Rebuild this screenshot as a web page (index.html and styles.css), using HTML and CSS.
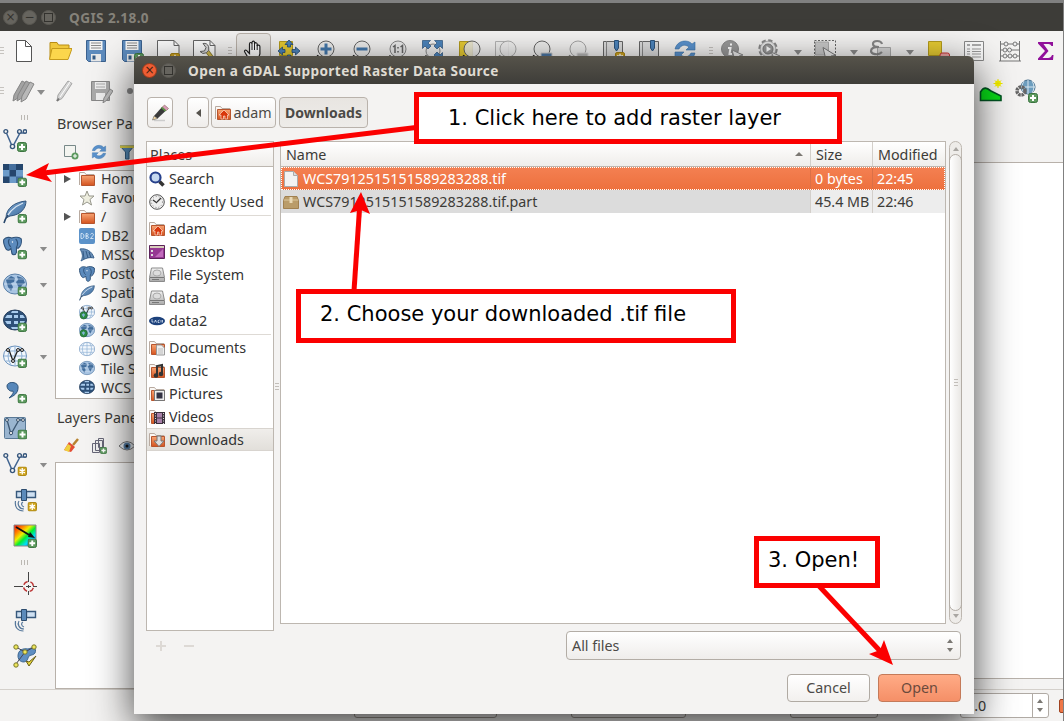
FILE: index.html
```html
<!DOCTYPE html>
<html lang="en">
<head>
<meta charset="utf-8">
<title>QGIS 2.18.0</title>
<link rel="stylesheet" href="styles.css">
</head>
<body>
<svg class="defs" width="0" height="0">
<defs>
<linearGradient id="fold" x1="0" y1="0" x2="0" y2="1"><stop offset="0" stop-color="#f8a574"/><stop offset="1" stop-color="#d4531f"/></linearGradient>
<linearGradient id="blu" x1="0" y1="0" x2="1" y2="1"><stop offset="0" stop-color="#7ea6cf"/><stop offset="1" stop-color="#3c6c9f"/></linearGradient>
<linearGradient id="rain" x1="0" y1="0" x2="1" y2="1"><stop offset="0" stop-color="#f00"/><stop offset=".25" stop-color="#f80"/><stop offset=".4" stop-color="#ee0"/><stop offset=".55" stop-color="#0e3"/><stop offset=".72" stop-color="#0df"/><stop offset="1" stop-color="#02c"/></linearGradient>
<linearGradient id="metal" x1="0" y1="0" x2="0" y2="1"><stop offset="0" stop-color="#f4f4f4"/><stop offset="1" stop-color="#aaa"/></linearGradient>
</defs>
<symbol id="plus" viewBox="0 0 10 10"><rect x=".5" y=".5" width="9" height="9" rx="2" fill="#5d9a5f" stroke="#3b7440"/><path d="M5 2v6M2 5h6" stroke="#fff" stroke-width="2"/></symbol>
<symbol id="star" viewBox="0 0 10 10"><rect x=".5" y=".5" width="9" height="9" rx="1.5" fill="#d0a520" stroke="#a98412"/><path d="M5 1.700v6.600M2.200 3.300l5.600 3.400M7.800 3.300l-5.600 3.400" stroke="#fff" stroke-width="1.400"/></symbol>
<symbol id="new" viewBox="0 0 24 24"><path d="M4.500 1.500h9l6 6v15h-15z" fill="#fff" stroke="#555"/><path d="M13.500 1.500v6h6" fill="none" stroke="#555"/></symbol>
<symbol id="open" viewBox="0 0 24 24"><path d="M2 20V3.500h7l1.500 2.500H21v4" fill="#f0c83c" stroke="#b98d15"/><path d="M1.500 20.500L4 9.500h20l-4 11z" fill="#fcd64c" stroke="#c59a1c"/></symbol>
<symbol id="save" viewBox="0 0 24 24"><path d="M2.500 1.500h19v21h-17l-2-2z" fill="#5d8bbd" stroke="#3b618e"/><path d="M5.500 2h13v9h-13z" fill="#f4f4f4"/><path d="M7 4h10M7 6.500h10M7 9h10" stroke="#888"/><path d="M7 15h10v7.500H7z" fill="#e9e9e9"/><path d="M8.500 16.500h3v4h-3z" fill="#335a85"/></symbol>
<symbol id="saveas" viewBox="0 0 24 24"><use href="#save"/><use href="#plus" x="14" y="14" width="10" height="10"/></symbol>
<symbol id="layout" viewBox="0 0 24 24"><path d="M1.500 17.500V1.500H18l5 5V17.500z" fill="#fff" stroke="#666"/><path d="M18 1.500v5h5" fill="none" stroke="#666"/><use href="#star" x="14" y="14" width="10" height="10"/></symbol>
<symbol id="wrench" viewBox="0 0 24 24"><path d="M1.500 17.500V1.500H18l5 5V17.500z" fill="#fff" stroke="#666"/><path d="M18 1.500v5h5" fill="none" stroke="#666"/><path d="M15 12l6 8" stroke="#8a7a2a" stroke-width="4"/><path d="M15 12l6 8" stroke="#d9c053" stroke-width="2.500"/><path d="M11 4.500a5 5 0 1 1-3 8l4.500-.5 1.500-3.500z" fill="#ddd" stroke="#666"/></symbol>
<symbol id="hand" viewBox="0 0 24 24"><path d="M7.500 21C5 17 4 15 2.500 12.500c0-2 2-1.500 3 0l2 2V5c0-2 2.300-2 2.500 0V3.500c.300-2 2.500-1.800 2.500 0V5c.500-2 2.700-1.500 2.700.300V7c.500-1.500 2.700-1 2.700.800V15l-2 6z" fill="#fff" stroke="#222" stroke-width="1.200"/><path d="M10 5v6M12.500 5v6M15.200 6v5" stroke="#222"/></symbol>
<symbol id="pan" viewBox="0 0 24 24"><path d="M2.500 2.500h13v14h-13z" fill="#e8cc32" stroke="#b59c1c"/><path d="M12 1l4 4.500h-2.500V8h-3V5.500H8zM12 23l4-4.500h-2.500V16h-3v2.500H8zM1 12l4.500-4v2.500H8v3H5.500V16zM23 12l-4.500-4v2.500H15v3h3.500V16z" fill="#4d85bd" stroke="#254d79" stroke-width=".8"/></symbol>
<symbol id="lens" viewBox="0 0 24 24"><path d="M6 17l-5 5" stroke="#111" stroke-width="3.500"/><circle cx="13" cy="10" r="8" fill="#ececec" fill-opacity=".85" stroke="#666"/></symbol>
<symbol id="zin" viewBox="0 0 24 24"><use href="#lens"/><path d="M13 4.500v11M7.500 10h11" stroke="#4479ad" stroke-width="3"/></symbol>
<symbol id="zout" viewBox="0 0 24 24"><use href="#lens"/><path d="M7.500 10h11" stroke="#4479ad" stroke-width="3"/></symbol>
<symbol id="z11" viewBox="0 0 24 24"><path d="M1 22l5-5" stroke="#111" stroke-width="3"/><circle cx="13" cy="10" r="8" fill="#ececec" stroke="#888"/><path d="M8 8l2-1.500v7.500M15.500 8l2-1.500v7.500M13 8v1.500M13 12v1.500" fill="none" stroke="#666" stroke-width="1.500"/></symbol>
<symbol id="zfull" viewBox="0 0 24 24"><path d="M6 17l-5 5" stroke="#111" stroke-width="3"/><circle cx="12" cy="12" r="7" fill="#eee" stroke="#888"/><path d="M1.500 1.500h8L7 4l3 3-3 3-3-3-2.500 2.500zM21.500 1.500h-8L16 4l-3 3 3 3 3-3 2.500 2.500zM21.500 21.500v-8L19 16l-3-3-3 3 3 3-2.500 2.500z" fill="#4d85bd" stroke="#2c557f" stroke-width=".7"/></symbol>
<symbol id="zsel" viewBox="0 0 24 24"><path d="M2.500 2.500h13v16h-13z" fill="#e8cc32" stroke="#b59c1c"/><use href="#lens" x="2"/></symbol>
<symbol id="zlay" viewBox="0 0 24 24" opacity=".5"><path d="M2.500 2.500h13v16h-13z" fill="#eee" stroke="#777"/><use href="#lens" x="2"/></symbol>
<symbol id="zlast" viewBox="0 0 24 24"><use href="#lens"/><path d="M12 22v-8h11v7z" fill="#4d78a5" stroke="#ccc"/></symbol>
<symbol id="znext" viewBox="0 0 24 24" opacity=".55"><use href="#lens"/><path d="M12 22v-8h11v7z" fill="#888" stroke="#ccc"/></symbol>
<symbol id="book" viewBox="0 0 24 24"><path d="M2.500 2.500h19v20h-19z" fill="#ddd" stroke="#666"/><path d="M5.500 2v20" stroke="#888"/><path d="M13.500 1.500h4V9l-2 3-2-3z" fill="#4d85bd" stroke="#2c557f"/></symbol>
<symbol id="bookadd" viewBox="0 0 24 24"><use href="#book"/><use href="#star" x="14" y="13" width="10" height="10"/></symbol>
<symbol id="refresh" viewBox="0 0 24 24"><path d="M2 10c2-9 13-10 17-5l3-2v8h-9l3-3c-4-3-8-2-10 2zM22 14c-2 9-13 10-17 5l-3 2v-8h9l-3 3c4 3 8 2 10-2z" fill="#5b93cf" stroke="#3b73aa" stroke-width=".6"/></symbol>
<symbol id="info" viewBox="0 0 24 24"><circle cx="10" cy="10" r="8.500" fill="#999" stroke="#888"/><path d="M11 4.500v2M8 9h2.500l-1 6H12" stroke="#fff" stroke-width="2" fill="none"/><path d="M12 11l11 5-4 1 4 5-2 1.500-4-5-2 3z" fill="#eee" stroke="#888"/></symbol>
<symbol id="gear" viewBox="0 0 24 24"><circle cx="12" cy="10" r="8.500" fill="#e5e5e5" stroke="#888" stroke-width="2.500" stroke-dasharray="4.200 2.470"/><circle cx="12" cy="10" r="7.800" fill="#e5e5e5" stroke="#999" stroke-width=".7"/><circle cx="12" cy="10" r="5" fill="#999" stroke="#777"/><path d="M10.500 7l4.500 3-4.500 3z" fill="#fff"/><path d="M15 13l9 4-5 4z" fill="#eee" stroke="#888"/></symbol>
<symbol id="select" viewBox="0 0 24 24"><path d="M1.500 1.500h21v19h-21z" fill="none" stroke="#666" stroke-dasharray="2 1.500"/><path d="M2.500 3h13v13h-13z" fill="#c9c9c9" stroke="#aaa"/><path d="M10 8.500l13 8-5 .500 3 5-2 1-3-5-3 3z" fill="#eee" stroke="#777"/></symbol>
<symbol id="eps" viewBox="0 0 24 24"><path d="M8.500 8.500h13v14h-13z" fill="#d5d5d5" stroke="#aaa"/><path d="M13 5C12 1 4 1 4 5c0 2.500 3 3 6 3-5 0-8 1-8 4s7 5 11 1" fill="none" stroke="#888" stroke-width="2.200"/></symbol>
<symbol id="desel" viewBox="0 0 24 24"><path d="M2.500 2.500h13v14h-13z" fill="#e8cc32" stroke="#b59c1c"/><rect x="14" y="14" width="9.500" height="9" rx="2" fill="#eea5a5" stroke="#c33"/></symbol>
<symbol id="table" viewBox="0 0 24 24"><path d="M2.500 2.500h19v19h-19z" fill="#fafafa" stroke="#888"/><path d="M5 6h3M10 6h9" stroke="#aaa" stroke-width="2"/><path d="M5 10h3M10 10h9M5 12.500h3M10 12.500h9M5 15h3M10 15h9M5 18h3M10 18h9" stroke="#999"/></symbol>
<symbol id="abacus" viewBox="0 0 24 24"><path d="M2.500 2v20M21.500 2v20M1 22h22M2 5h20M2 11h20M2 17h20" stroke="#777" fill="none"/><g fill="#eee" stroke="#777"><circle cx="8" cy="5" r="2"/><circle cx="17" cy="5" r="2"/><circle cx="7" cy="11" r="2"/><circle cx="11.500" cy="11" r="2"/><circle cx="7" cy="17" r="2"/><circle cx="12" cy="17" r="2"/><circle cx="17" cy="17" r="2"/></g></symbol>
<symbol id="sigma" viewBox="0 0 24 24"><path d="M4 3h15v4h-1.500q-1-2-3-2H9.500l5 7-6 7H14q3 0 4-3h1.500l-.5 5H4v-1.500L11 12 4 4.500z" fill="#90109a"/></symbol>
<symbol id="pencil" viewBox="0 0 24 24"><path d="M4 22l1-6L15 2l4 2.500-10 15z" fill="#d3d3d3" stroke="#a5a5a5"/><path d="M17 3L7 18" stroke="#fff"/><path d="M4 22l2-2.500" stroke="#777" stroke-width="2"/></symbol>
<symbol id="pencils" viewBox="0 0 24 24"><g fill="#a3a3a3" stroke="#858585"><path d="M1 22l1-6L10 2l4 2-8 15z"/><path d="M5 22l1-6L14 2l4 2-8 15z"/><path d="M9 23l1-6 8-14 4 2-8 15z" fill="#b8b8b8"/></g></symbol>
<symbol id="saveed" viewBox="0 0 24 24"><path d="M2.500 2.500h18v19h-18z" fill="#aaa" stroke="#888"/><path d="M6 3h11v7H6zM7 14h9v7H7z" fill="#eee"/><path d="M7 5h9M7 8h9" stroke="#aaa"/><path d="M14 24l1-5 6-9 3 2-6 9z" fill="#bbb" stroke="#888"/></symbol>
<symbol id="hill" viewBox="0 0 24 24"><path d="M1.500 21.500V13C5 7 8 9 12 12l10 5v4.500z" fill="#08dc18" stroke="#052" stroke-width="1.600"/><circle cx="19" cy="4.500" r="3" fill="#ff0"/><path d="M19 0v9M14.500 4.500h9M16 1.500l6 6M22 1.500l-6 6" stroke="#eee600"/></symbol>
<symbol id="webgear" viewBox="0 0 24 24"><circle cx="13" cy="8" r="7" fill="#6c9dbe" stroke="#3c6686"/><path d="M6 8h14M13 1v14M9 2q-4 6 0 12M17 2q4 6 0 12" stroke="#d6e5ef" fill="none"/><circle cx="6" cy="12" r="4" fill="none" stroke="#666" stroke-width="3.500" stroke-dasharray="2.500 .7"/><use href="#plus" x="13" y="14" width="10" height="10"/></symbol>
<symbol id="vec" viewBox="0 0 24 24"><path d="M3 4l6.500 15L17 5h5" fill="none" stroke="#426591" stroke-width="1.500"/><g fill="#f4f3f2" stroke="#36567c" stroke-width="1.400"><circle cx="2.800" cy="3.500" r="1.900"/><circle cx="9.500" cy="18.500" r="2.100"/><circle cx="16.500" cy="3.500" r="1.900"/><circle cx="22" cy="3.500" r="1.700"/></g></symbol>
<symbol id="addvec" viewBox="0 0 24 24"><use href="#vec"/><use href="#plus" x="14" y="14" width="10" height="10"/></symbol>
<symbol id="newvec" viewBox="0 0 24 24"><use href="#vec"/><use href="#star" x="14.500" y="14.500" width="9.500" height="9.500"/></symbol>
<symbol id="raster" viewBox="0 0 24 24"><path d="M0 0h20v19H0z" fill="#6c9bc9"/><path d="M0 0h6.500v6H0zM13 0h7v6h-7zM6.500 6H13v6.500H6.500zM0 12.500h6.500V19H0z" fill="#25466d"/><path d="M6.500 0H13v6H6.500zM13 12.500h7V19h-7z" fill="#456f9e"/><use href="#plus" x="14.500" y="13.500" width="9.500" height="9.500"/></symbol>
<symbol id="quill" viewBox="0 0 24 24"><path d="M3 18C3 8 12 2 23 1c0 7-5 14-16 15z" fill="url(#blu)" stroke="#31547c"/><path d="M1 23C4 14 10 7 20 3" stroke="#dbe7f3" fill="none" stroke-width="1.300"/><path d="M1 23q1-4 4-8" stroke="#28466a" fill="none" stroke-width="1.500"/></symbol>
<symbol id="addquill" viewBox="0 0 24 24"><use href="#quill"/><use href="#plus" x="14.500" y="14" width="9.500" height="9.500"/></symbol>
<symbol id="eleph" viewBox="0 0 24 24"><path d="M1 4c3-4 8-3 10-2 4-2 10-1 12 1 1 5-1 10-4 12l-2-1v6c-1 4-6 4-6 0l-1-5c-2 3-4 3-6 1C2 13 0 7 1 4z" fill="#5c8bbd" stroke="#2f5279" stroke-width="1.400"/><path d="M8 3c-2 3-1 8 2 10M16 3c3 3 3 7 1 11" fill="none" stroke="#2f5279" stroke-width="1.400"/><circle cx="12" cy="7" r=".9" fill="#fff"/></symbol>
<symbol id="addpg" viewBox="0 0 24 24"><use href="#eleph" width="19" height="20"/><use href="#plus" x="14.500" y="14" width="9.500" height="9.500"/></symbol>
<symbol id="gmap" viewBox="0 0 24 24"><ellipse cx="12" cy="12" rx="11.500" ry="10" fill="#a9c5e3" stroke="#597fa8"/><path d="M3 8l5-4 4 2-1 4-3 1 2 4-2 4-3-4zM14 4l6 2 2 5-3 2-2 5-2-4-2-4 2-2z" fill="#426e9d"/><path d="M4 7h16M1 12h22M4 17h16" stroke="#e5eef7" stroke-width=".5"/></symbol>
<symbol id="addmap" viewBox="0 0 24 24"><use href="#gmap"/><use href="#plus" x="14.500" y="14.500" width="9.500" height="9.500"/></symbol>
<symbol id="gdark" viewBox="0 0 24 24"><ellipse cx="12" cy="12" rx="11.500" ry="10" fill="#2d5078" stroke="#263f5e"/><path d="M4 7h5v3H2zM11 7h4v3h-4zM17 7h3l2 3h-5zM2 13h6v3H4zM11 13h4v3h-4zM17 13h5l-2 3h-3zM8 19h7v2H9zM9 3h6v2H8z" fill="#a9cbed"/></symbol>
<symbol id="adddark" viewBox="0 0 24 24"><use href="#gdark"/><use href="#plus" x="14.500" y="14.500" width="9.500" height="9.500"/></symbol>
<symbol id="glight" viewBox="0 0 24 24"><ellipse cx="12" cy="12" rx="11.500" ry="10" fill="#f3f8fd" stroke="#6c93be"/><path d="M3 7h18M1 12h22M3 17h18M12 2v20M8 3q-6 9 0 18M16 3q6 9 0 18" fill="none" stroke="#90b2d6"/></symbol>
<symbol id="gvec" viewBox="0 0 24 24"><use href="#glight"/><path d="M6 6l4 11 5-11h4" fill="none" stroke="#222" stroke-width="1.300"/><g fill="#ddd" stroke="#222"><circle cx="5" cy="6" r="1.500"/><circle cx="10" cy="17" r="1.500"/><circle cx="15" cy="6" r="1.500"/><circle cx="19" cy="6" r="1.500"/></g></symbol>
<symbol id="addwfs" viewBox="0 0 24 24"><use href="#gvec"/><use href="#plus" x="14.500" y="14.500" width="9.500" height="9.500"/></symbol>
<symbol id="arc1" viewBox="0 0 24 24"><use href="#gvec"/><circle cx="7" cy="17" r="5.500" fill="#2d8c46" stroke="#185b31"/><path d="M4 16l3-2 2 2-2 4" fill="#82b5d8"/></symbol>
<symbol id="arc2" viewBox="0 0 24 24"><use href="#gmap"/><circle cx="7" cy="17" r="5.500" fill="#2d8c46" stroke="#185b31"/><path d="M4 16l3-2 2 2-2 4" fill="#82b5d8"/></symbol>
<symbol id="comma" viewBox="0 0 24 24"><path d="M4 6c0-5 12-5 11 2 0 5-4 8-9 10 3-3 5-5 4-7-3 1-6-2-6-5z" fill="#5787ba" stroke="#2e5379"/><use href="#plus" x="14.500" y="14" width="9.500" height="9.500"/></symbol>
<symbol id="virt" viewBox="0 0 24 24"><rect x="1.500" y="1.500" width="21" height="21" rx="1" fill="#9ab5d0" stroke="#597895"/><path d="M4 4l4 14 8-14h4" fill="none" stroke="#3e5873" stroke-width="1.300"/><g fill="#ddd" stroke="#3e5873"><circle cx="4" cy="4" r="1.500"/><circle cx="8" cy="17" r="1.700"/><circle cx="15" cy="4" r="1.500"/><circle cx="20" cy="4" r="1.500"/></g><use href="#plus" x="14.500" y="13.500" width="10" height="10"/></symbol>
<symbol id="gps" viewBox="0 0 24 24"><path d="M3.500 3.500h7v6h-7zM13.500 3.500h9v6h-9z" fill="#cfe0f2" stroke="#37587c" stroke-width="1.400"/><path d="M8.500 1.500h5v11h-5z" fill="#5c8bbb" stroke="#2d4c6e"/><path d="M10 14c-2 1-2 4 1 5M6 13c-2 3 0 8 5 8M2.500 13c-1 6 2 10 8 10" fill="none" stroke="#57789c" stroke-width="1.200"/></symbol>
<symbol id="newgps" viewBox="0 0 24 24"><use href="#gps"/><use href="#star" x="14.500" y="14" width="9.500" height="9.500"/></symbol>
<symbol id="rainbow" viewBox="0 0 24 24"><path d="M1 1h22v21H1z" fill="url(#rain)" stroke="#888"/><path d="M3 3l15 9" stroke="#111" stroke-width="1.800"/><path d="M22 14l-5-6-2 5z" fill="#111"/><use href="#plus" x="14.500" y="14.500" width="9.500" height="9.500"/></symbol>
<symbol id="cross" viewBox="0 0 24 24"><path d="M15.500 0v10M15.500 13v3M15.500 19v4M1 14.500h9M13 14.500h5M20 14.500h4" stroke="#444"/><circle cx="15.500" cy="14.500" r="5" fill="none" stroke="#b33" stroke-width="1.500" stroke-dasharray="5 2.850" stroke-dashoffset="-1.400"/></symbol>
<symbol id="topo" viewBox="0 0 24 24"><path d="M5 12c0-6 5-8 10-7 5-2 9-1 7 4-2 3-6 1-7 5-1 6-10 5-10-2z" fill="#5e8ec2" stroke="#3d6691"/><path d="M3 3l9 5 9-5M12 8L3 20" stroke="#445" fill="none"/><g fill="#eee75c" stroke="#77762c"><circle cx="3" cy="3" r="2.200"/><circle cx="21" cy="3" r="2.200"/><circle cx="12" cy="8" r="2.200"/><circle cx="3" cy="21" r="2.200"/></g><path d="M13 17l3 1 7-6-7 10z" fill="#eedc3c" stroke="#665c17"/></symbol>
<symbol id="addbox" viewBox="0 0 16 16"><path d="M1.500 1.500h11v11h-11z" fill="#f3f4f0" stroke="#788"/><circle cx="12" cy="12" r="3.500" fill="#5d9a5f"/><path d="M12 10v4M10 12h4" stroke="#fff"/></symbol>
<symbol id="funnel" viewBox="0 0 16 16"><path d="M1 2h14l-5 6v7H6.500V8z" fill="#568bb7" stroke="#345c80"/><path d="M1 1.500h14V4H1z" fill="#ddd14c"/></symbol>
<symbol id="folder" viewBox="0 0 16 16"><path d="M.5 14V1.500h5L7 3.500h8v2" fill="#faf7f4" stroke="#b8aaa0"/><path d="M2.500 4.500h13V14.500H2.500z" fill="url(#fold)" stroke="#b7552e"/></symbol>
<symbol id="fav" viewBox="0 0 16 16"><path d="M8 1l2 5h5l-4 3.500 1.500 5.500L8 12l-4.500 3L5 9.500 1 6h5z" fill="#eeeedf" stroke="#99998e"/></symbol>
<symbol id="db2" viewBox="0 0 16 16"><rect width="16" height="16" rx="2" fill="#5c93ca"/><path d="M2 5.500v5c4 .500 4-5.500 0-5zM7 5.500v5c4 0 3-2.500 0-2.500 3 0 3-2.500 0-2.500zM11.500 6.500c1-2 4-1 2.500 1l-2.500 3h3" fill="none" stroke="#e8f2fc" stroke-width=".8"/></symbol>
<symbol id="mssql" viewBox="0 0 16 16"><path d="M1 2c6-1 12 2 14 9-5-1-8 0-13 3 2-4 2-7-1-12z" fill="#688fb9" stroke="#3f658f"/><path d="M4 4l1 8M7 4l2 7M10 5l2 6" stroke="#355b85"/></symbol>
<symbol id="brush" viewBox="0 0 16 16"><path d="M15 1l-5 6" stroke="#b78330" stroke-width="2.500"/><path d="M6 4l6 5-4 5-7-2z" fill="#e34d34"/><path d="M1 12l4-6 3 2-2 6z" fill="#f0cf3e"/></symbol>
<symbol id="group" viewBox="0 0 16 16"><path d="M1.500 5.500h7v9h-7zM4.500 2.500h7v10h-7zM7.500.5h5v9h-5z" fill="#eee" stroke="#667"/><use href="#plus" x="9" y="9" width="7" height="7"/></symbol>
<symbol id="eye" viewBox="0 0 16 16"><path d="M0 8q8-9 16 0-8 8-16 0z" fill="#e8eef3" stroke="#777"/><circle cx="8" cy="8" r="3.500" fill="#537ba2"/><circle cx="8" cy="8" r="1.500" fill="#111"/></symbol>
<symbol id="edit" viewBox="0 0 18 18"><path d="M3 16.500h11" stroke="#ccc" stroke-width="1.500"/><path d="M3 12l8-9 4 3.500-8.500 8z" fill="#3a3a3a"/><path d="M11.500 3l2-2 4 3.500-2 2z" fill="#d99bb9" stroke="#865" stroke-width=".6"/><path d="M10.500 3.500l4 3.500" stroke="#5a9a40" stroke-width="1.500"/><path d="M1.500 16l1.500-4 3.500 2.500z" fill="#f3d9a7" stroke="#444" stroke-width=".5"/></symbol>
<symbol id="home" viewBox="0 0 16 16"><use href="#folder"/><path d="M9 5l5 5h-1.500v4h-2.500v-3H8.500v3H6v-4H4z" fill="#d9370c" stroke="#fff0e6" stroke-width=".6"/></symbol>
<symbol id="search" viewBox="0 0 16 16"><path d="M10.500 10.500l4 4" stroke="#333" stroke-width="3.500"/><circle cx="6.500" cy="6.500" r="5" fill="#c6d9ef" stroke="#27418c" stroke-width="2.200"/></symbol>
<symbol id="clock" viewBox="0 0 16 16"><circle cx="8" cy="8" r="7.300" fill="#eee" stroke="#555"/><path d="M8 8l4-4M8 9L4 6" stroke="#333" stroke-width="1.200"/><circle cx="8" cy="8" r="5.500" fill="none" stroke="#888" stroke-dasharray="1 2"/></symbol>
<symbol id="desk" viewBox="0 0 16 16"><path d="M.5 1.500h15v13H.5z" fill="#963993" stroke="#5c225a"/><path d="M1 2h14v2H1z" fill="#d9cdbc"/><path d="M2 6h2v2H2zM2 10h2v2H2z" fill="#ddd"/><path d="M6 13L14 5v8z" fill="#c16bbc"/></symbol>
<symbol id="drive" viewBox="0 0 16 16"><path d="M2.500 1h11l2 9.500v4H.500v-4z" fill="url(#metal)" stroke="#8b8b8b"/><ellipse cx="8" cy="6" rx="4" ry="3" fill="#ddd" stroke="#aaa"/><path d="M1 10.500h14M3 12.500h7" stroke="#777"/></symbol>
<symbol id="lacie" viewBox="0 0 16 16"><ellipse cx="8" cy="8" rx="8" ry="4.200" fill="#1d427c"/><path d="M3 6v3h1.500M5.500 9.500l1-2.500 1 2.500M10.500 7q-2 0-1.500 2.500h1.500M12 7v2.500M13.500 7v2.500" fill="none" stroke="#dce7f5" stroke-width=".8"/></symbol>
<symbol id="docs" viewBox="0 0 16 16"><use href="#folder"/><path d="M7.500 5h5l3 3v7h-8z" fill="#eee" stroke="#999"/><path d="M9 9h5M9 11h5M9 13h5" stroke="#bbb"/></symbol>
<symbol id="music" viewBox="0 0 16 16"><use href="#folder"/><path d="M8 13V3l5-1v9" fill="none" stroke="#333" stroke-width="2"/><circle cx="7" cy="12.500" r="2.300" fill="#333"/><circle cx="12" cy="11" r="2.300" fill="#333"/></symbol>
<symbol id="pics" viewBox="0 0 16 16"><use href="#folder"/><path d="M5.500 4.500h10v10h-10z" fill="#eee" stroke="#777"/><path d="M7.500 6.500h6v6h-6z" fill="#334"/></symbol>
<symbol id="video" viewBox="0 0 16 16"><use href="#folder"/><path d="M5 3h11v12H5z" fill="#3a303c"/><path d="M8 4h5v4.500H8zM8 9.500h5V14H8z" fill="#a780a8"/><path d="M6.500 4v11M14.500 4v11" stroke="#ddd" stroke-dasharray="1 1.500"/></symbol>
<symbol id="down" viewBox="0 0 16 16"><use href="#folder"/><path d="M8 4h4v5h3l-5 5.500L5 9h3z" fill="#ddd" stroke="#777"/></symbol>
<symbol id="file" viewBox="0 0 16 16"><path d="M1.500.5h9l4 4v11h-13z" fill="#f3f3f2" stroke="#aaa"/><path d="M10.500.5v4h4" fill="#ddd" stroke="#aaa"/></symbol>
<symbol id="box" viewBox="0 0 16 16"><path d="M2 2.500h12l1.500 4v8H.500v-8z" fill="#ba9c69" stroke="#a18150"/><path d="M1 6h14" stroke="#dcc79d"/><path d="M6.500 3h3v6h-3z" fill="#e9d8b4"/></symbol>
</svg>

<main class="screen">
<section class="qgis">
<header class="titlebar"><i class="wbtn">×</i><i class="wbtn">−</i><i class="wbtn sq"></i><span class="apptitle">QGIS 2.18.0</span></header>
<div class="tools row1">
<i class="grip"></i>
<span><svg><use href="#new"/></svg></span><span><svg><use href="#open"/></svg></span><span><svg><use href="#save"/></svg></span><span><svg><use href="#saveas"/></svg></span><span><svg><use href="#layout"/></svg></span><span><svg><use href="#wrench"/></svg></span>
<i class="grip wide"></i>
<span class="pressed"><svg><use href="#hand"/></svg></span>
<span><svg><use href="#pan"/></svg></span><span><svg><use href="#zin"/></svg></span><span><svg><use href="#zout"/></svg></span><span><svg><use href="#z11"/></svg></span><span><svg><use href="#zfull"/></svg></span><span><svg><use href="#zsel"/></svg></span><span><svg><use href="#zlay"/></svg></span><span><svg><use href="#zlast"/></svg></span><span><svg><use href="#znext"/></svg></span><span><svg><use href="#bookadd"/></svg></span><span><svg><use href="#book"/></svg></span><span><svg><use href="#refresh"/></svg></span>
<i class="grip mid"></i>
<span><svg><use href="#info"/></svg></span><span><svg><use href="#gear"/></svg></span><b class="drop"></b><span class="snug"><svg><use href="#select"/></svg></span><b class="drop"></b><span class="snug"><svg><use href="#eps"/></svg></span><b class="drop"></b><span><svg><use href="#desel"/></svg></span><span><svg><use href="#table"/></svg></span><span><svg><use href="#abacus"/></svg></span><span><svg><use href="#sigma"/></svg></span>
</div>
<div class="tools row2">
<i class="grip"></i>
<span><svg><use href="#pencils"/></svg></span><b class="drop tiny"></b><span><svg><use href="#pencil"/></svg></span><span><svg><use href="#saveed"/></svg></span><em class="dot"></em>
<div class="fill"></div>
<span><svg><use href="#hill"/></svg></span><span><svg><use href="#webgear"/></svg></span>
</div>
<div class="work">
<nav class="side">
<i class="grip flat"></i>
<div class="s"><svg><use href="#addvec"/></svg></div>
<div class="s"><svg><use href="#raster"/></svg></div>
<div class="s"><svg><use href="#addquill"/></svg></div>
<div class="s"><svg><use href="#addpg"/></svg><b class="drop"></b></div>
<div class="s"><svg><use href="#addmap"/></svg><b class="drop"></b></div>
<div class="s"><svg><use href="#adddark"/></svg></div>
<div class="s"><svg><use href="#addwfs"/></svg><b class="drop"></b></div>
<div class="s"><svg><use href="#comma"/></svg></div>
<div class="s"><svg><use href="#virt"/></svg></div>
<div class="s"><svg><use href="#newvec"/></svg><b class="drop"></b></div>
<div class="s in"><svg><use href="#newgps"/></svg></div>
<div class="s in"><svg><use href="#rainbow"/></svg></div>
<i class="grip flat low"></i>
<div class="s in"><svg><use href="#cross"/></svg></div>
<div class="s in"><svg><use href="#gps"/></svg></div>
<div class="s in"><svg><use href="#topo"/></svg></div>
</nav>
<div class="docks">
<h2 class="dockname">Browser Pa</h2>
<div class="mini"><svg><use href="#addbox"/></svg><svg><use href="#refresh"/></svg><svg><use href="#funnel"/></svg></div>
<ul class="tree">
<li><b class="exp"></b><svg><use href="#folder"/></svg>Hom</li>
<li><b></b><svg><use href="#fav"/></svg>Favou</li>
<li><b class="exp"></b><svg><use href="#folder"/></svg>/</li>
<li><b></b><svg><use href="#db2"/></svg>DB2</li>
<li><b></b><svg><use href="#mssql"/></svg>MSSQ</li>
<li><b></b><svg><use href="#eleph"/></svg>PostG</li>
<li><b></b><svg><use href="#quill"/></svg>Spati</li>
<li><b></b><svg><use href="#arc1"/></svg>ArcG</li>
<li><b></b><svg><use href="#arc2"/></svg>ArcG</li>
<li><b></b><svg><use href="#glight"/></svg>OWS</li>
<li><b></b><svg><use href="#gmap"/></svg>Tile S</li>
<li><b></b><svg><use href="#gdark"/></svg>WCS</li>
</ul>
<h2 class="dockname layers">Layers Pane</h2>
<div class="mini low"><svg><use href="#brush"/></svg><svg><use href="#group"/></svg><svg><use href="#eye"/></svg></div>
<div class="layerbox"></div>
</div>
<div class="canvas"></div>
</div>
<footer class="status"><i class="field f1"></i><i class="field f2"></i><i class="field f3"></i><div class="spin"><span>0.0</span><b class="ud"><i class="up"></i><i class="dn"></i></b></div><i class="chk"></i></footer>
</section>

<section class="dialog">
<header class="dtitle"><i class="wbtn close">×</i><i class="wbtn sq"></i><span class="dname">Open a GDAL Supported Raster Data Source</span></header>
<div class="path"><span class="pbtn pen"><svg><use href="#edit"/></svg></span><span class="pbtn back"><i></i></span><span class="pbtn adam"><svg><use href="#home"/></svg>adam</span><span class="pbtn cur">Downloads</span></div>
<div class="panes">
<div class="places">
<div class="head">Places</div>
<ul>
<li><svg><use href="#search"/></svg>Search</li>
<li><svg><use href="#clock"/></svg>Recently Used</li>
<li class="sep"></li>
<li><svg><use href="#home"/></svg>adam</li>
<li><svg><use href="#desk"/></svg>Desktop</li>
<li><svg><use href="#drive"/></svg>File System</li>
<li><svg><use href="#drive"/></svg>data</li>
<li><svg><use href="#lacie"/></svg>data2</li>
<li class="sep"></li>
<li><svg><use href="#docs"/></svg>Documents</li>
<li><svg><use href="#music"/></svg>Music</li>
<li><svg><use href="#pics"/></svg>Pictures</li>
<li><svg><use href="#video"/></svg>Videos</li>
<li class="on"><svg><use href="#down"/></svg>Downloads</li>
</ul>
</div>
<i class="handle"></i>
<div class="files">
<div class="frow head"><span class="hn">Name<i class="up"></i></span><span>Size</span><span class="mod">Modified</span></div>
<div class="frow sel"><span><svg><use href="#file"/></svg>WCS7912515151589283288.tif</span><span>0 bytes</span><span>22:45</span></div>
<div class="frow alt"><span><svg><use href="#box"/></svg>WCS7912515151589283288.tif.part</span><span>45.4 MB</span><span>22:46</span></div>
</div>
<div class="scroll"><i class="up"></i><div class="thumb"><i class="handle"></i></div><i class="dn"></i></div>
</div>
<div class="filter"><span class="pm"><i class="p"></i><i class="m"></i></span><div class="combo"><span>All files</span><b class="ud"><i class="up"></i><i class="dn"></i></b></div></div>
<div class="actions"><button>Cancel</button><button class="ok">Open</button></div>
</section>

<svg class="arrows" viewBox="0 0 1064 721"><g stroke="#fb0000" stroke-width="5" fill="none"><path d="M416 127.500L44 173"/><path d="M354 291l5.500-82"/><path d="M819 586l62 66"/></g><g fill="#fb0000"><path d="M26 175l23-12-4 10 7 9z"/><path d="M361 192l9 22-9-4-11 3z"/><path d="M893 665l-9-25-4 10-11 4z"/></g></svg>
<div class="note n1">1. Click here to add raster layer</div>
<div class="note n2">2. Choose your downloaded .tif file</div>
<div class="note n3">3. Open!</div>
</main>
</body>
</html>
```
FILE: styles.css
```css
* { box-sizing: border-box; }
body { margin: 0; font: 14.3px/19px "Noto Sans", "Open Sans", sans-serif; color: #3c3b37; }
svg { display: block; flex: none; }
ul { list-style: none; margin: 0; padding: 0; }
.defs { position: absolute; }
.screen { position: relative; width: 1064px; height: 721px; overflow: hidden; background: #808080; }
.up, .dn { display: block; width: 0; height: 0; border: 4px solid transparent; border-top: 0; border-bottom: 4px solid #7b7873; }
.dn { border-bottom: 0; border-top: 4px solid #7b7873; }

/* main window */
.qgis { position: absolute; left: 0; top: 3px; width: 1063px; height: 718px; background: #f4f3f2; display: flex; flex-direction: column; }
.titlebar { height: 28px; flex: none; background: #3d3c38; display: flex; align-items: center; gap: 4px; padding-left: 3px; color: #85827a; }
.wbtn { width: 15px; height: 15px; border-radius: 50%; background: #66645e; color: #33322e; border: 1px solid #5a5852; display: flex; align-items: center; justify-content: center; font: 12px/12px "DejaVu Sans", sans-serif; }
.sq::before { content: ""; width: 7px; height: 7px; border: 1px solid #33322e; }
.apptitle { font-weight: 700; font-size: 13.6px; margin-left: 9px; letter-spacing: .4px; padding-top: 1px; }
.tools { height: 40px; flex: none; display: flex; align-items: center; }
.tools span { width: 36px; flex: none; display: flex; justify-content: center; }
.tools svg, .side svg { width: 24px; height: 24px; }
.row2 { padding-right: 18px; }
.grip { width: 6px; height: 9px; flex: none; background: repeating-linear-gradient(#c6c3bf 0 1px, transparent 1px 3px); background-size: 4px 9px; background-repeat: no-repeat; }
.grip.wide { width: 14px; background-position: 6px 0; }
.grip.mid { width: 11px; background-position: 6px 0; }
.tools .pressed { width: 35px; height: 36px; align-items: center; border: 1px solid #b9b1a9; border-radius: 4px; background: #e9e7e4; }
.drop { width: 22px; display: flex; justify-content: center; flex: none; }
.drop::before { content: ""; width: 8px; height: 5px; background: #8b8b8b; clip-path: polygon(0 0, 100% 0, 50% 100%); }
.tools .drop { padding: 3px 0 0 2px; }
.tools .tiny { width: 5px; }
.tiny::before { flex: none; margin-left: -9px; }
.tools .snug { width: 34px; }
.dot { width: 6px; height: 6px; border-radius: 50%; background: #888; margin-left: 8px; }
.fill { flex: 1; }
.work { height: 578px; flex: none; display: flex; }
.side { width: 55px; flex: none; display: flex; flex-direction: column; padding-top: 4px; }
.side .s { height: 36px; flex: none; display: flex; align-items: center; padding-left: 3px; }
.side .in { padding-left: 13px; }
.side .drop { width: 33px; padding-top: 2px; }
.grip.flat { width: 8px; height: 5px; margin-left: 21px; background: repeating-linear-gradient(90deg, #bbb8b3 0 1px, transparent 1px 3px); margin-bottom: 2px; }
.grip.low { margin: 6px 0 1px 21px; }
.docks { width: 919px; flex: none; }
.dockname { margin: 0; padding: 3px 0 0 2px; font-size: 14.3px; font-weight: 400; height: 32px; }
.mini { display: flex; gap: 12px; padding-left: 8px; height: 27px; padding-top: 1px; }
.mini svg { width: 16px; height: 16px; }
.tree { border: 1px solid #b8b1aa; background: #fff; height: 229px; padding-top: 0; }
.tree li { height: 18.95px; line-height: 17px; display: flex; align-items: center; padding: 0 0 3px 8px; }
.tree b { width: 15px; }
.tree .exp::before { content: ""; display: block; width: 7px; height: 8px; background: #555; clip-path: polygon(0 0, 100% 50%, 0 100%); }
.tree svg { width: 16px; height: 16px; margin-right: 6px; }
.layers { padding-top: 9px; height: 40px; }
.mini.low { height: 23px; padding-top: 0; margin-top: -1px; margin-bottom: 1px; }
.layerbox { height: 227px; background: #fff; border: 1px solid #b8b1aa; }
.canvas { flex: 1; margin: 51px 0 10px; background: #fff; border: solid #b8b1aa; border-width: 1px 0; }
.status { flex: 1; border-top: 1px solid #d4d0cb; display: flex; padding: 3px 0 0 354px; overflow: hidden; }
.field { border: 1px solid #9f9992; border-radius: 3px; height: 25px; flex: none; }
.f1 { width: 143px; }
.f2 { width: 115px; margin-left: 74px; }
.f3 { width: 88px; margin-left: 104px; }
.spin { flex: none; margin-left: 82px; width: 89px; height: 25px; background: #fff; border: 1px solid #b0aaa4; border-radius: 3px; display: flex; align-items: center; }
.spin > span { width: 71px; padding-left: 5px; }
.spin .ud { border-left: 1px solid #b0aaa4; padding: 5px 4px; }
.ud { display: flex; flex-direction: column; gap: 5px; }
.ud .up, .ud .dn { border-left-width: 3px; border-right-width: 3px; }
.chk { margin: 6px 0 0 10px; width: 14px; height: 14px; background: #ef7747; border: 1px solid #a0421f; border-radius: 2px; flex: none; }

/* file chooser */
.dialog { position: absolute; left: 134px; top: 56px; width: 840px; height: 658px; background: #f4f3f2; border-radius: 7px 7px 0 0; box-shadow: 0 12px 40px rgba(0,0,0,.75); display: flex; flex-direction: column; }
.dtitle { height: 28px; flex: none; background: linear-gradient(#56534a, #3e3d39); border-radius: 6px 6px 0 0; display: flex; align-items: center; gap: 4px; padding-left: 8px; color: #dfdbd2; }
.dtitle .close { background: #ee5d34; border-color: #993a1b; color: #40200f; }
.dname { font-weight: 700; margin-left: 8px; font-size: 13.6px; letter-spacing: .4px; white-space: nowrap; }
.path { height: 57px; flex: none; padding: 13px 0 0 13px; display: flex; }
.pbtn { height: 31px; border: 1px solid #b9b2ab; border-radius: 4px; background: linear-gradient(#fff, #efedeb); display: flex; align-items: center; justify-content: center; color: #4c4a46; }
.pen { width: 26px; margin-right: 14px; }
.pen svg { width: 18px; height: 18px; }
.back { width: 22px; margin-right: 2px; }
.back i { border: 4px solid transparent; border-right: 5px solid #55524d; border-left: 0; }
.adam { width: 65px; margin-right: 3px; gap: 2px; }
.adam svg { width: 16px; height: 16px; }
.cur { width: 89px; font-weight: 700; font-size: 14px; background: linear-gradient(#e8e5e1, #eeece9); }
.panes { height: 490px; flex: none; display: flex; padding-left: 12px; }
.places { width: 128px; background: #fff; border: 1px solid #bdb7b0; }
.head { height: 25px; background: linear-gradient(#fff, #efedea); border-bottom: 1px solid #bdb7b0; }
.places .head { padding: 3px; }
.places li { height: 23px; display: flex; align-items: center; gap: 4px; padding-left: 3px; color: #333; white-space: nowrap; }
.places li svg { width: 16px; height: 16px; margin-left: -1px; }
.places .sep { height: 4px; border-bottom: 1px solid #dedad5; margin: -1px 2px 1px; }
.places .on { background: linear-gradient(#f0eeeb, #e2dfda); border: solid #d8d4cf; border-width: 1px 0; }
.handle { width: 4px; height: 7px; margin: auto 1px; background: repeating-linear-gradient(#c2beb9 0 1px, transparent 1px 3px); }
.files { width: 666px; height: 483px; border: 1px solid #bdb7b0; background: #fff; }
.frow { height: 23px; display: grid; grid-template-columns: 530px 62px 1fr; align-items: stretch; }
.frow > span { display: flex; align-items: center; padding-left: 4px; border-right: 1px solid #d3cfca; white-space: nowrap; }
.frow > span:first-child { padding-left: 2px; }
.frow > span:last-child { border-right: 0; }
.frow svg { width: 16px; height: 16px; margin-right: 4px; }
.frow.head { height: 25px; }
.head.frow > span { padding-left: 5px; }
.head.frow > .hn { justify-content: space-between; padding-right: 7px; }
.sel { background: linear-gradient(#f48052, #ed703d); color: #fff; outline: 1px dotted #fff; outline-offset: -1px; }
.frow.sel > span { border-color: #db7047; }
.alt { background: #ededed; }
.alt > span:first-child { background: #dcdcdc; }
.scroll { width: 13px; margin-left: 3px; height: 483px; border: 1px solid #bdb7b0; border-radius: 7px; display: flex; flex-direction: column; align-items: center; padding: 5px 0; background: #eeece9; }
.scroll > .up, .scroll > .dn { border-left-width: 3px; border-right-width: 3px; opacity: .6; }
.thumb { width: 13px; flex: 1; margin: 3px 0; border: 1px solid #b3ada6; border-radius: 7px; display: flex; background: linear-gradient(90deg, #fff, #e9e7e4); }
.thumb .handle { margin: auto; }
.filter { display: flex; height: 30px; flex: none; padding: 0 13px 0 22px; justify-content: space-between; }
.pm { display: flex; gap: 18px; padding-top: 10px; }
.pm i { width: 10px; height: 10px; background: linear-gradient(#ddd9d5, #ddd9d5) 0 4px / 10px 2px no-repeat; }
.pm .p { background: linear-gradient(#ddd9d5, #ddd9d5) 0 4px / 10px 2px no-repeat, linear-gradient(#ddd9d5, #ddd9d5) 4px 0 / 2px 10px no-repeat; }
.combo { width: 395px; height: 29px; border: 1px solid #b3ada6; border-radius: 4px; background: linear-gradient(#fff, #efedeb); display: flex; align-items: center; justify-content: space-between; padding: 0 7px 0 5px; color: #4c4a46; }
.actions { display: flex; justify-content: flex-end; gap: 8px; padding: 13px 13px 0 0; }
button { width: 83px; height: 28px; font: inherit; color: #4c4a46; border: 1px solid #b0aaa3; border-radius: 4px; background: linear-gradient(#fff, #f2f0ee); padding: 0 0 2px; }
.ok { background: linear-gradient(#ffab86, #f58f67); border-color: #c47a59; color: #6b4a3c; }

/* annotations */
.arrows { position: absolute; left: 0; top: 0; width: 1064px; height: 721px; }
.note { position: absolute; background: #fff; border: 5px solid #fb0000; font: 21px/24px "DejaVu Sans", sans-serif; color: #000; white-space: nowrap; }
.n1 { left: 414px; top: 92px; width: 428px; height: 52px; padding: 9px 0 0 29px; }
.n2 { left: 296px; top: 289px; width: 440px; height: 54px; padding: 8px 0 0 19px; }
.n3 { left: 754px; top: 536px; width: 126px; height: 52px; padding: 7px 0 0 9px; }
```
